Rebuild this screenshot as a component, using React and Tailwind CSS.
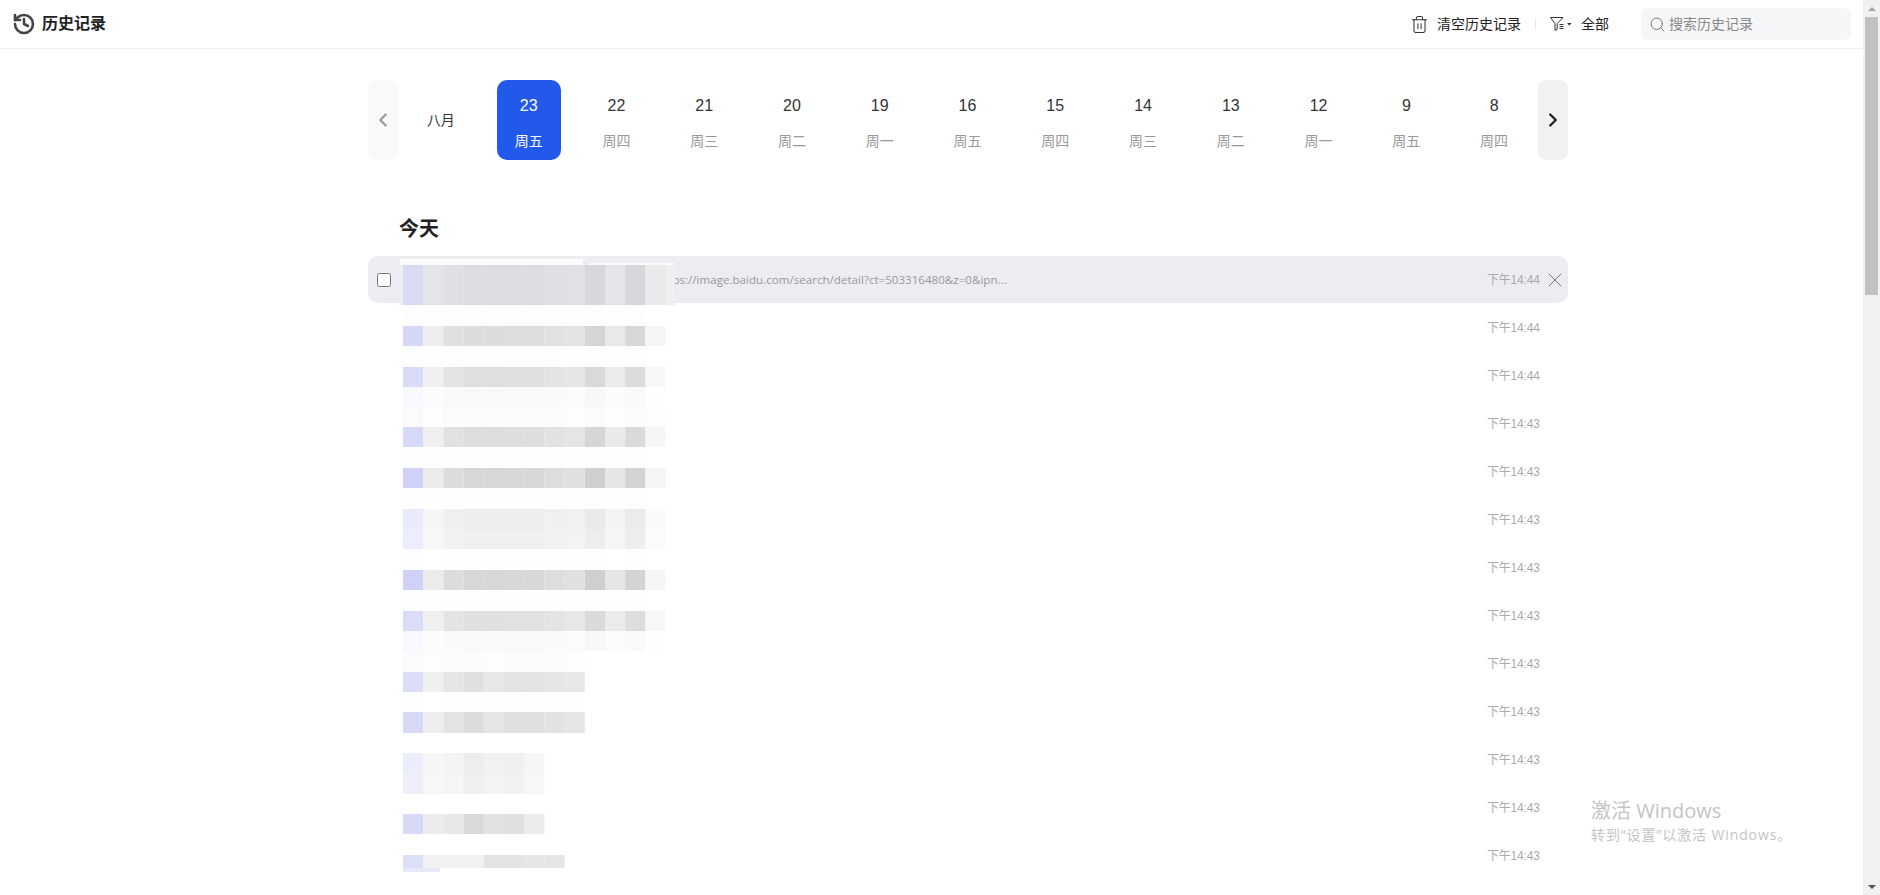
import React from 'react';
import { History, Trash2, Search, X, ChevronLeft, ChevronRight } from 'lucide-react';

const days = [
  ['23', '周五'], ['22', '周四'], ['21', '周三'], ['20', '周二'], ['19', '周一'], ['16', '周五'],
  ['15', '周四'], ['14', '周三'], ['13', '周二'], ['12', '周一'], ['9', '周五'], ['8', '周四'],
];

const times = ['14:44', '14:44', '14:44', '14:43', '14:43', '14:43', '14:43', '14:43', '14:43', '14:43', '14:43', '14:43', '14:43'];

const pat0 = ['#d9dbf3', '#e4e5e8', '#dfe0e4', '#dcdde1', '#dcdde1', '#dcdde1', '#dcdde1', '#dfe0e3', '#e0e1e4', '#d7d8db', '#e4e5e8', '#d6d7da', '#e9eaec'];
const patA = ['#cfd2f6', '#ececec', '#dcdcdc', '#d7d7d7', '#d7d7d7', '#d8d8d8', '#d8d8d8', '#dddddd', '#e0e0e0', '#cfcfcf', '#e6e6e6', '#d3d3d3', '#f5f5f5'];
const patB = ['#d0d2f6', '#ebebeb', '#dedede', '#d6d6d6', '#e0e0e0', '#d9d9d9', '#d9d9d9', '#dddddd', '#e0e0e0'];
const patC = ['#d0d2f6', '#e9e9e9', '#e3e3e3', '#d2d2d2', '#dddddd', '#dadada', '#e8e8e8'];
const patD = ['#d6dbf6', '#efefef', '#eeeeee', '#efefef', '#dedede', '#dedede', '#e2e2e2', '#e2e2e2'];

// y, height, opacity, colours of the blurred title strips
const strips = [
  [265, 40, 1, pat0],
  [305, 21, 0.04, patA],
  [326, 20, 0.88, patA],
  [346, 21, 0.03, patA],
  [367, 20, 0.8, patA],
  [387, 20, 0.14, patA],
  [407, 20, 0.08, patA],
  [427, 20, 0.85, patA],
  [447, 21, 0.03, patA],
  [468, 20, 1, patA],
  [488, 21, 0.03, patA],
  [509, 20, 0.45, patA],
  [529, 20, 0.38, patA],
  [549, 21, 0.02, patA],
  [570, 20, 1, patA],
  [590, 21, 0.03, patA],
  [611, 20, 0.78, patA],
  [631, 20, 0.14, patA],
  [651, 21, 0.08, patB],
  [672, 20, 0.75, patB],
  [692, 20, 0.02, patB],
  [712, 21, 0.85, patB],
  [753, 20, 0.4, patC],
  [773, 21, 0.35, patC],
  [814, 20, 0.85, patC],
  [855, 13, 0.85, patD],
];

function Mosaic() {
  return (
    <svg className="absolute left-[400px] top-[259px] pointer-events-none" width="275" height="636" viewBox="400 259 275 636">
      <rect x="400" y="259" width="183" height="6" fill="#fbfbfc" />
      <rect x="589" y="263" width="86" height="2" fill="#fbfbfc" />
      <rect x="400" y="265" width="275" height="40" fill="#eeeff1" />
      <rect x="403" y="868" width="37" height="4" fill="#e6e9f8" />
      {strips.map(([y, h, op, cols]) =>
        cols.map((c, i) => (
          <rect key={y + '-' + i} x={403 + i * 20.2} y={y} width="20.2" height={h} fill={c} fillOpacity={op} />
        ))
      )}
    </svg>
  );
}

function FilterIcon() {
  return (
    <svg width="22" height="16" viewBox="0 0 22 16" fill="none" stroke="#333" strokeWidth="1">
      <path d="M0.5 1.5h12.5M0.5 1.5l4.5 6v7l2.2-1.2V7.5l5.8-6" />
      <path d="M9.5 8.5h4M9.5 10.5h4M9.5 12.5h4" />
      <path d="M17 7h4.5l-2.2 2.5z" fill="#333" stroke="none" />
    </svg>
  );
}

export default function App() {
  return (
    <div className="relative flex h-screen overflow-hidden bg-white [font-family:'Liberation_Sans','Noto_Sans_CJK_SC',sans-serif] text-[#222]">
      <div className="flex-1 min-w-0">
        <header className="flex items-center h-[49px] border-b border-[#f0f0f0] pl-[12px] pr-[12px]">
          <History size={24} strokeWidth={2.6} className="text-[#444]" />
          <span className="ml-[6px] text-base font-bold">历史记录</span>
          <div className="ml-auto flex items-center">
            <Trash2 size={19} strokeWidth={1.3} className="text-[#333]" />
            <span className="ml-2 text-sm">清空历史记录</span>
            <div className="mx-[14px] h-3 w-px bg-[#e8e8e8]" />
            <FilterIcon />
            <span className="ml-[9px] text-sm">全部</span>
            <div className="ml-8 flex items-center h-8 w-[210px] rounded-md bg-[#f5f6f8] pl-[8px]">
              <Search size={17} strokeWidth={1.2} className="text-[#666]" />
              <span className="ml-[3px] text-sm text-[#888]">搜索历史记录</span>
            </div>
          </div>
        </header>

        <div className="ml-[368px] w-[1200px]">
          <div className="mt-[31px] flex h-20">
            <button className="flex w-[30px] items-center justify-center rounded-lg bg-[#f9f9f9] text-[#999]">
              <ChevronLeft size={22} strokeWidth={2.4} />
            </button>
            <div className="-ml-px grid flex-1 grid-cols-13">
              <div className="flex items-center justify-center text-sm text-[#333]">八月</div>
              {days.map(([num, week], i) => (
                <div key={num} className="flex items-center justify-center">
                  <div className={'flex h-20 w-16 flex-col items-center rounded-[10px] pt-4 ' + (i === 0 ? 'bg-[#2259eb] text-white' : 'text-[#333]')}>
                    <span className="text-base leading-5">{num}</span>
                    <span className={'mt-[15px] text-sm leading-5 ' + (i === 0 ? 'text-white' : 'text-[#999]')}>{week}</span>
                  </div>
                </div>
              ))}
            </div>
            <button className="flex w-[30px] items-center justify-center rounded-lg bg-[#f1f1f1] text-[#222]">
              <ChevronRight size={22} strokeWidth={2.6} />
            </button>
          </div>

          <h2 className="mt-[55px] pl-[31px] text-xl leading-7 font-bold">今天</h2>

          <div className="mt-[13px]">
            {times.map((t, i) => (
              <div key={i} className={'mb-px flex h-[47px] items-center rounded-[10px] pl-[9px] pr-[6px] ' + (i === 0 ? 'bg-[#ecedf1]' : '')}>
                {i === 0 && <input type="checkbox" readOnly className="h-[14px] w-[14px]" />}
                {i === 0 && (
                  <span className="ml-[266px] text-[11.6px] text-[#999] [font-family:'Open_Sans','Noto_Sans_CJK_SC',sans-serif]">
                    https://image.baidu.com/search/detail?ct=503316480&z=0&ipn...
                  </span>
                )}
                <span className="ml-auto w-[52px] whitespace-nowrap text-xs tracking-[-0.2px] text-[#aaa]">下午{t}</span>
                <div className="ml-[9px] flex w-[14px] justify-center">
                  {i === 0 && <X size={24} strokeWidth={1} className="shrink-0 text-[#777]" />}
                </div>
              </div>
            ))}
          </div>
        </div>
      </div>

      {/* window scrollbar */}
      <div className="flex w-[17px] shrink-0 flex-col items-center bg-[#f1f1f1]">
        <div className="flex h-[17px] items-center justify-center">
          <div className="h-0 w-0 border-x-4 border-b-4 border-x-transparent border-b-[#a3a3a3]" />
        </div>
        <div className="h-[278px] w-[13px] bg-[#c1c1c1]" />
        <div className="mt-auto flex h-[17px] items-center justify-center">
          <div className="h-0 w-0 border-x-4 border-t-4 border-x-transparent border-t-[#505050]" />
        </div>
      </div>

      <Mosaic />

      {/* activation watermark */}
      <div className="absolute left-[1591px] top-[797px] text-[#c4c4c4] pointer-events-none [font-family:'Open_Sans','Noto_Sans_CJK_SC',sans-serif]">
        <div className="text-xl leading-7">激活 Windows</div>
        <div className="text-sm leading-5 tracking-[0.9px]">转到“设置”以激活 Windows。</div>
      </div>
    </div>
  );
}
